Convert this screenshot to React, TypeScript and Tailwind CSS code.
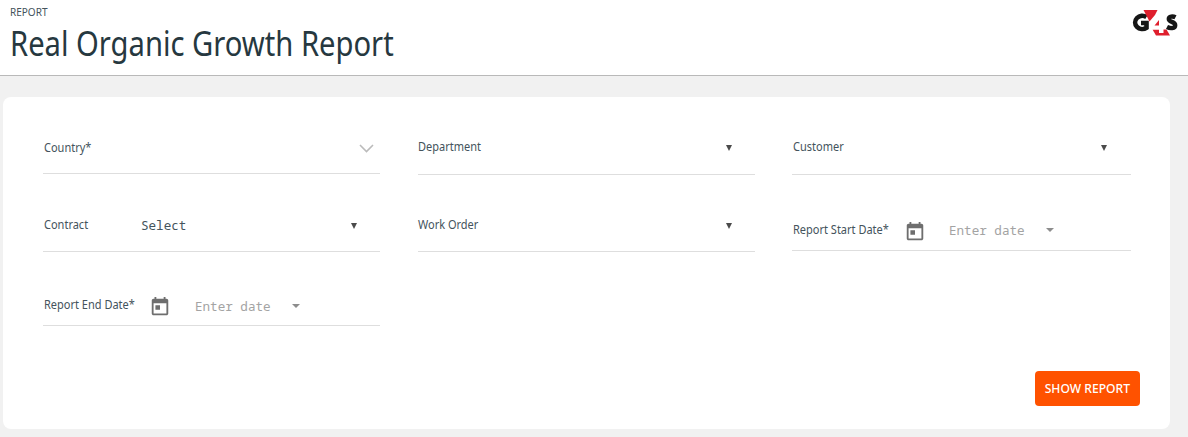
import type { ReactNode } from "react";

const labelText =
  "block origin-left translate-y-[1px] scale-x-[0.88] whitespace-nowrap text-[12.500px] leading-[16px] text-[#44535c]";
const monoText = "font-['Noto_Sans_Mono','DejaVu_Sans_Mono',monospace] text-[12.600px] leading-[16px]";

function Triangle() {
  return (
    <svg className="block h-[6px] w-[6px]" viewBox="0 0 6 6">
      <path d="M0 0h6L3 6z" fill="#4b4b4b" />
    </svg>
  );
}

function Caret() {
  return (
    <svg className="block h-[4px] w-[8px]" viewBox="0 0 8 4">
      <path d="M0 0h8L4 4z" fill="#8d8d8d" />
    </svg>
  );
}

function Calendar() {
  return (
    <svg className="block h-[22px] w-[22px] shrink-0" viewBox="0 0 24 24">
      <path
        d="M19 3h-1V1h-2v2H8V1H6v2H5c-1.11 0-1.99.9-1.99 2L3 19c0 1.1.89 2 2 2h14c1.1 0 2-.9 2-2V5c0-1.1-.9-2-2-2zm0 16H5V8h14v11zM7 10h5v5H7z"
        fill="#6e6e6e"
      />
    </svg>
  );
}

function Field({ className, children }: { className: string; children: ReactNode }) {
  return <div className={"flex items-start border-b border-[#dedede] " + className}>{children}</div>;
}

function Logo() {
  return (
    <svg className="mt-[9px] block h-[28px] w-[46px]" viewBox="0 0 46 28">
      <path d="M14.500 8A7.200 6.600 0 1 0 14.500 18.800V14H9" fill="none" stroke="#161616" strokeWidth="4.600" />
      <path d="M11.500 1H25.500L23 6L17.500 12.500z" fill="#df1f2d" />
      <path d="M20.500 20.500H34.500L38 26.500H24z" fill="#df1f2d" />
      <path d="M17.500 20.500V16.500L26 5.500H31.500V20.500H31.500V24H27V20.500z" fill="#fff" />
      <path d="M27 11v5.500h-4.500z" fill="#df1f2d" />
      <path d="M43.500 8.300c-2.500-1.300-6.700-1.200-6.700 1.700 0 3.300 6.400 2.500 6.400 6.200 0 3.500-5.200 3.400-8.200 1.800" fill="none" stroke="#161616" strokeWidth="4.400" />
    </svg>
  );
}

export default function App() {
  return (
    <div className="flex h-[437px] w-[1188px] flex-col overflow-hidden bg-[#f1f1f1] font-['Noto_Sans',sans-serif]">
      <header className="flex h-[76px] shrink-0 justify-between border-b border-[#b9b9b9] bg-white pl-[10px] pr-[10px]">
        <div className="pt-[6px]">
          <div className="w-fit origin-left scale-x-[0.91] text-[11px] leading-[12px] text-[#44535c]">REPORT</div>
          <h1 className="mt-[1px] w-fit origin-left scale-x-[0.858] whitespace-nowrap text-[34px] leading-[48px] text-[#263840]">
            Real Organic Growth Report
          </h1>
        </div>
        <Logo />
      </header>
      <main className="ml-[3px] mt-[21px] flex h-[332px] w-[1167px] flex-col rounded-[8px] bg-white pl-[40px] pr-[30px]">
        <div className="grid grid-cols-[337px_337px_338px] gap-x-[38px]">
          <Field className="h-[77px] justify-between pr-[6px] pt-[42px]">
            <span className={labelText + " ml-[0.5px]"}>Country*</span>
            <svg className="mt-[5px] block h-[9px] w-[15px]" viewBox="0 0 15 9">
              <path d="M1 1l6.500 6.500L14 1" fill="none" stroke="#bbb" strokeWidth="1.600" />
            </svg>
          </Field>
          <Field className="h-[78px] justify-between pr-[23px] pt-[41px]">
            <span className={labelText}>Department</span>
            <span className="mt-[7px]"><Triangle /></span>
          </Field>
          <Field className="-ml-px h-[78px] justify-between pr-[24px] pt-[41px]">
            <span className={labelText + " ml-[0.5px]"}>Customer</span>
            <span className="mt-[7px]"><Triangle /></span>
          </Field>
          <Field className="h-[77px] pr-[23px] pt-[41px]">
            <span className="w-[98px]"><span className={labelText + " ml-[0.5px]"}>Contract</span></span>
            <span className={monoText + " mt-[2px] text-[#44535c]"}>Select</span>
            <span className="ml-auto mt-[7px]"><Triangle /></span>
          </Field>
          <Field className="h-[77px] justify-between pr-[23px] pt-[41px]">
            <span className={labelText}>Work Order</span>
            <span className="mt-[7px]"><Triangle /></span>
          </Field>
          <Field className="-ml-px h-[76px] pt-[46px]">
            <span className="w-[112px]"><span className={labelText + " ml-[0.5px]"}>Report Start Date*</span></span>
            <Calendar />
            <span className={monoText + " ml-[23px] mt-[2px] text-[#a3a3a3]"}>Enter date</span>
            <span className="ml-[21px] mt-[7px]"><Caret /></span>
          </Field>
          <Field className="h-[74px] pt-[44px]">
            <span className="w-[106px]"><span className={labelText + " ml-[0.5px]"}>Report End Date*</span></span>
            <Calendar />
            <span className={monoText + " ml-[24px] mt-[3px] text-[#a3a3a3]"}>Enter date</span>
            <span className="ml-[21px] mt-[8px]"><Caret /></span>
          </Field>
        </div>
        <button className="mb-[23px] mt-auto flex h-[35px] w-[105px] items-center justify-center self-end rounded-[4px] bg-[#ff5200] text-white">
          <span className="-translate-x-[0.5px] scale-x-[0.93] whitespace-nowrap text-[13px] font-medium">SHOW REPORT</span>
        </button>
      </main>
    </div>
  );
}
